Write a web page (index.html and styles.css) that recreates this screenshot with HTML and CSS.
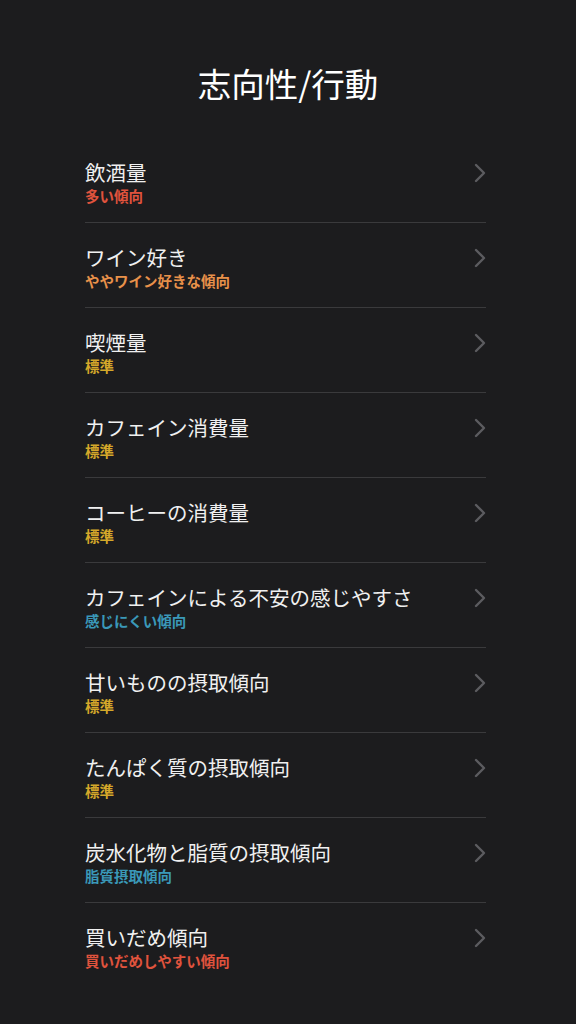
FILE: index.html
```html
<!DOCTYPE html>
<html lang="ja">
  <head>
    <meta charset="UTF-8" />
    <meta name="viewport" content="width=device-width, initial-scale=1.0" />
    <title>志向性/行動</title>
    <link rel="stylesheet" href="styles.css">
  </head>
  <body>
    <h1 class="page-title">志向性/行動</h1>

    <ul class="trait-list">
      <li class="trait-row">
        <div class="trait-text">
          <div class="trait-name">飲酒量</div>
          <div class="trait-result red">多い傾向</div>
        </div>
        <svg class="chevron" width="14" height="20" viewBox="0 0 14 20"><path d="M3 2 L11 10 L3 18" /></svg>
      </li>
      <li class="trait-row">
        <div class="trait-text">
          <div class="trait-name">ワイン好き</div>
          <div class="trait-result orange">ややワイン好きな傾向</div>
        </div>
        <svg class="chevron" width="14" height="20" viewBox="0 0 14 20"><path d="M3 2 L11 10 L3 18" /></svg>
      </li>
      <li class="trait-row">
        <div class="trait-text">
          <div class="trait-name">喫煙量</div>
          <div class="trait-result yellow">標準</div>
        </div>
        <svg class="chevron" width="14" height="20" viewBox="0 0 14 20"><path d="M3 2 L11 10 L3 18" /></svg>
      </li>
      <li class="trait-row">
        <div class="trait-text">
          <div class="trait-name">カフェイン消費量</div>
          <div class="trait-result yellow">標準</div>
        </div>
        <svg class="chevron" width="14" height="20" viewBox="0 0 14 20"><path d="M3 2 L11 10 L3 18" /></svg>
      </li>
      <li class="trait-row">
        <div class="trait-text">
          <div class="trait-name">コーヒーの消費量</div>
          <div class="trait-result yellow">標準</div>
        </div>
        <svg class="chevron" width="14" height="20" viewBox="0 0 14 20"><path d="M3 2 L11 10 L3 18" /></svg>
      </li>
      <li class="trait-row">
        <div class="trait-text">
          <div class="trait-name">カフェインによる不安の感じやすさ</div>
          <div class="trait-result blue">感じにくい傾向</div>
        </div>
        <svg class="chevron" width="14" height="20" viewBox="0 0 14 20"><path d="M3 2 L11 10 L3 18" /></svg>
      </li>
      <li class="trait-row">
        <div class="trait-text">
          <div class="trait-name">甘いものの摂取傾向</div>
          <div class="trait-result yellow">標準</div>
        </div>
        <svg class="chevron" width="14" height="20" viewBox="0 0 14 20"><path d="M3 2 L11 10 L3 18" /></svg>
      </li>
      <li class="trait-row">
        <div class="trait-text">
          <div class="trait-name">たんぱく質の摂取傾向</div>
          <div class="trait-result yellow">標準</div>
        </div>
        <svg class="chevron" width="14" height="20" viewBox="0 0 14 20"><path d="M3 2 L11 10 L3 18" /></svg>
      </li>
      <li class="trait-row">
        <div class="trait-text">
          <div class="trait-name">炭水化物と脂質の摂取傾向</div>
          <div class="trait-result blue">脂質摂取傾向</div>
        </div>
        <svg class="chevron" width="14" height="20" viewBox="0 0 14 20"><path d="M3 2 L11 10 L3 18" /></svg>
      </li>
      <li class="trait-row last">
        <div class="trait-text">
          <div class="trait-name">買いだめ傾向</div>
          <div class="trait-result red">買いだめしやすい傾向</div>
        </div>
        <svg class="chevron" width="14" height="20" viewBox="0 0 14 20"><path d="M3 2 L11 10 L3 18" /></svg>
      </li>
    </ul>
  </body>
</html>
```

FILE: styles.css
```css
/* General styling */
body {
  margin: 0;
  background-color: #1c1c1e;
  color: #f2f2f2;
  font-family: "Noto Sans CJK JP", "Noto Sans", sans-serif;
}

.page-title {
  margin: 0;
  padding: 63px 0 35px;
  font-size: 33.5px;
  line-height: 40px;
  font-weight: 400;
  text-align: center;
  color: #ffffff;
}

/* List */
.trait-list {
  list-style: none;
  margin: 0 90px 0 85px;
  padding: 0;
}

.trait-row {
  display: flex;
  justify-content: space-between;
  align-items: flex-start;
  box-sizing: border-box;
  height: 85px;
  padding-top: 22px;
  border-bottom: 1px solid #3a3a3c;
}

.trait-row.last {
  border-bottom: none;
}

.trait-name {
  font-size: 20.5px;
  line-height: 24px;
  color: #f0f0f0;
}

.trait-result {
  margin-top: 3px;
  font-size: 14.5px;
  line-height: 18px;
  font-weight: 700;
}

.red {
  color: #e0533d;
}

.orange {
  color: #e8914a;
}

.yellow {
  color: #d4a82a;
}

.blue {
  color: #3a98b8;
}

.chevron {
  margin-top: 3px;
  margin-right: -1px;
}

.chevron path {
  fill: none;
  stroke: #5c5c60;
  stroke-width: 2.4;
  stroke-linecap: round;
  stroke-linejoin: round;
}
```
